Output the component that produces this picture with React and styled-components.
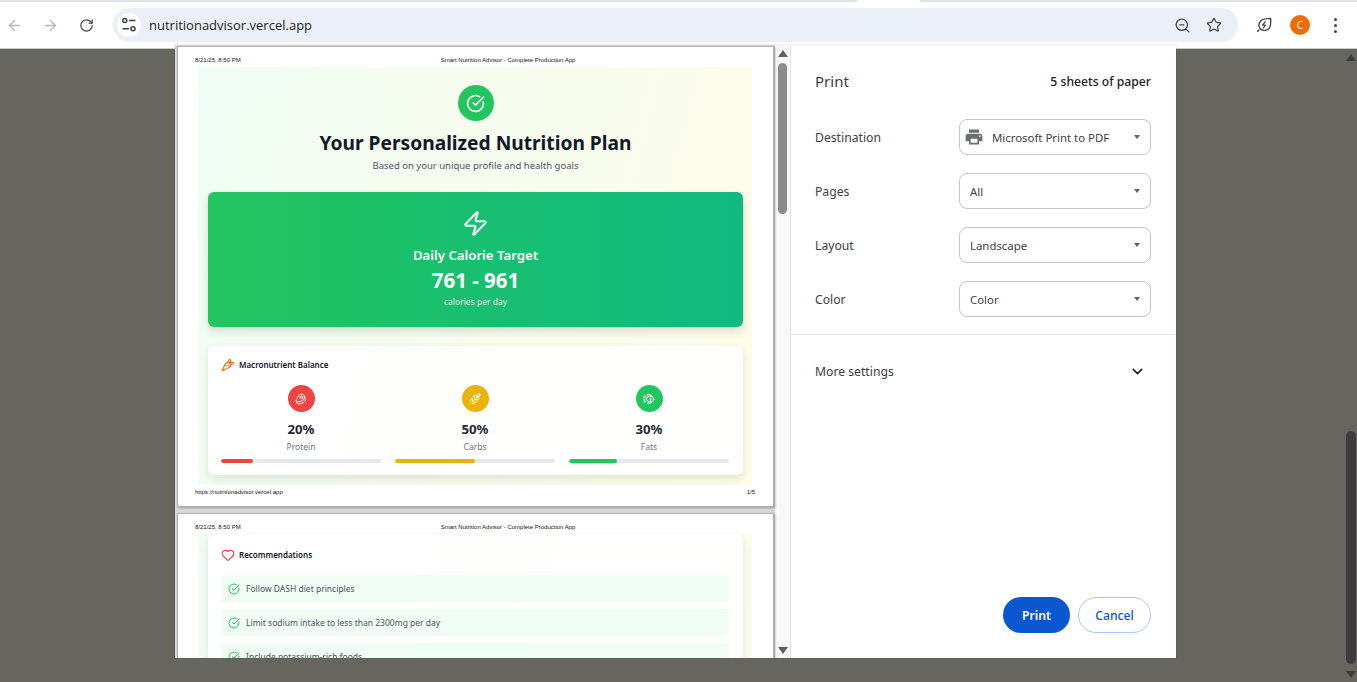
import styled, { createGlobalStyle } from "styled-components";
import { ArrowLeft, ArrowRight, RotateCw, ZoomOut, Star, CircleCheckBig, Zap, Carrot, Beef, Wheat, Fish, Heart, ChevronDown } from "lucide-react";
import { MdPrint } from "react-icons/md";

const UI_FONT = `"Noto Sans", "Open Sans", sans-serif`;

const GlobalStyle = createGlobalStyle`
  html, body {
    margin: 0;
    height: 100%;
    overflow: hidden;
    background: #66655e;
    font-family: ${UI_FONT};
  }
  * { box-sizing: border-box; }
`;

const macros = [
  { value: "20%", label: "Protein", color: "#ef4444", fill: 20, Icon: Beef },
  { value: "50%", label: "Carbs", color: "#eab308", fill: 50, Icon: Wheat },
  { value: "30%", label: "Fats", color: "#22c55e", fill: 30, Icon: Fish },
];

const settings = [
  { label: "Destination", value: "Microsoft Print to PDF", printer: true },
  { label: "Pages", value: "All" },
  { label: "Layout", value: "Landscape" },
  { label: "Color", value: "Color" },
];

const recommendations = [
  "Follow DASH diet principles",
  "Limit sodium intake to less than 2300mg per day",
  "Include potassium-rich foods",
];

const TuneIcon = () => (
  <svg width="16" height="16" viewBox="0 0 16 16" fill="none" stroke="#3c4043" strokeWidth="1.5">
    <circle cx="3.8" cy="3.6" r="2" />
    <path d="M8 3.6h6.5M1.5 11.8H8" />
    <circle cx="12" cy="11.8" r="2" />
  </svg>
);

const LeafIcon = () => (
  <svg width="16" height="16" viewBox="0 0 16 16" fill="none" stroke="#474747" strokeWidth="1.4" strokeLinejoin="round">
    <path d="M1.3 14.7l2-2.100M14.600 1.400c.4 5 .1 8.200-1.600 10-2.300 2.400-6.200 2.500-8.600.7C2.300 9.900 2.500 6.300 4.700 4 6.800 2 10.300 1.400 14.600 1.400z" />
    <path d="M9.500 4.300L6.500 8.200h3L7 11.400" strokeWidth="1.300" />
  </svg>
);

const App = () => {
  return (
    <>
      <GlobalStyle />
      <TabEdge><ActiveTab /></TabEdge>
      <Toolbar>
        <NavIcon $muted><ArrowLeft size={17} strokeWidth={2} /></NavIcon>
        <NavIcon $muted><ArrowRight size={17} strokeWidth={2} /></NavIcon>
        <NavIcon><RotateCw size={15} strokeWidth={2} /></NavIcon>
        <AddressBar>
          <SiteChip><TuneIcon /></SiteChip>
          <Url>nutritionadvisor.vercel.app</Url>
          <AddressActions>
            <ZoomOut size={17} strokeWidth={1.8} color="#474747" />
            <Star size={16} strokeWidth={1.8} color="#474747" />
          </AddressActions>
        </AddressBar>
        <RightActions>
          <LeafIcon />
          <Avatar>C</Avatar>
          <Dots><i /><i /><i /></Dots>
        </RightActions>
      </Toolbar>

      <Backdrop>
        <PageScrollbar>
          <ScrollArrow $dark />
          <PageThumb />
          <ScrollArrow $dark $down />
        </PageScrollbar>
      </Backdrop>

      <Dialog>
        <Preview>
          <Sheets>
            <Sheet>
              <SheetHeader>
                <span>8/21/25, 8:50 PM</span>
                <SheetTitle>Smart Nutrition Advisor - Complete Production App</SheetTitle>
              </SheetHeader>
              <PageBody>
                <BadgeCircle><CircleCheckBig size={19} strokeWidth={2} color="#fff" /></BadgeCircle>
                <Title>Your Personalized Nutrition Plan</Title>
                <Subtitle>Based on your unique profile and health goals</Subtitle>
                <CalorieCard>
                  <Zap size={27} strokeWidth={1.8} color="#fff" />
                  <CalorieLabel>Daily Calorie Target</CalorieLabel>
                  <CalorieValue>761 - 961</CalorieValue>
                  <CalorieUnit>calories per day</CalorieUnit>
                </CalorieCard>
                <MacroCard>
                  <CardHeading>
                    <Carrot size={14} strokeWidth={2} color="#f97316" />
                    Macronutrient Balance
                  </CardHeading>
                  <MacroGrid>
                    {macros.map(({ value, label, color, fill, Icon }) => (
                      <Macro key={label}>
                        <MacroIcon $color={color}><Icon size={12} strokeWidth={2} color="#fff" /></MacroIcon>
                        <MacroValue>{value}</MacroValue>
                        <MacroLabel>{label}</MacroLabel>
                        <Track><Fill $color={color} style={{ width: `${fill}%` }} /></Track>
                      </Macro>
                    ))}
                  </MacroGrid>
                </MacroCard>
              </PageBody>
              <SheetFooter>
                <span>https://nutritionadvisor.vercel.app</span>
                <span>1/5</span>
              </SheetFooter>
            </Sheet>

            <Sheet>
              <SheetHeader>
                <span>8/21/25, 8:50 PM</span>
                <SheetTitle>Smart Nutrition Advisor - Complete Production App</SheetTitle>
              </SheetHeader>
              <PageBody $second>
                <RecCard>
                  <RecHeading>
                    <Heart size={14} strokeWidth={2} color="#ef4444" />
                    Recommendations
                  </RecHeading>
                  {recommendations.map((text) => (
                    <RecRow key={text}>
                      <CircleCheckBig size={12} strokeWidth={2} color="#22c55e" />
                      {text}
                    </RecRow>
                  ))}
                </RecCard>
              </PageBody>
            </Sheet>
          </Sheets>
          <PreviewScrollbar>
            <ScrollArrow />
            <PreviewThumb />
            <ScrollArrow $down />
          </PreviewScrollbar>
        </Preview>

        <Settings>
          <SettingsHeader>
            <PrintTitle>Print</PrintTitle>
            <SheetCount>5 sheets of paper</SheetCount>
          </SettingsHeader>
          <SettingRows>
            {settings.map(({ label, value, printer }) => (
              <SettingRow key={label}>
                <SettingLabel>{label}</SettingLabel>
                <Select $withIcon={printer}>
                  {printer && <MdPrint size={20} color="#6b6f73" />}
                  <SelectValue>{value}</SelectValue>
                  <Caret />
                </Select>
              </SettingRow>
            ))}
          </SettingRows>
          <MoreSettings>
            More settings
            <ChevronDown size={17} strokeWidth={2.2} color="#202124" />
          </MoreSettings>
          <Buttons>
            <PrintButton>Print</PrintButton>
            <CancelButton>Cancel</CancelButton>
          </Buttons>
        </Settings>
      </Dialog>
    </>
  );
};

export default App;

const TabEdge = styled.div`
  height: 2px;
  background: #dde3e9;
  padding-left: 857px;
`;

const ActiveTab = styled.div`
  width: 63px;
  height: 100%;
  background: #fff;
`;

const Toolbar = styled.div`
  height: 47px;
  background: #fff;
  display: flex;
  align-items: center;
  padding-left: 0;
  border-bottom: 1px solid #c9cacc;
`;

const NavIcon = styled.div`
  width: 36px;
  flex: none;
  display: flex;
  justify-content: center;
  color: ${(p) => (p.$muted ? "#b4b6b9" : "#474747")};
  &:first-child {
    margin-left: -4px;
  }
`;

const AddressBar = styled.div`
  width: 1125px;
  height: 34px;
  margin-left: 9px;
  flex: none;
  border-radius: 17px;
  background: #ebeff8;
  display: flex;
  align-items: center;
  padding-left: 4px;
`;

const SiteChip = styled.div`
  width: 24px;
  height: 24px;
  border-radius: 50%;
  background: #fff;
  display: flex;
  align-items: center;
  justify-content: center;
`;

const Url = styled.div`
  margin-left: 8px;
  font-family: "Open Sans", sans-serif;
  font-size: 13px;
  color: #1f1f1f;
`;

const AddressActions = styled.div`
  margin-left: auto;
  display: flex;
  align-items: center;
  gap: 15px;
  padding-right: 16px;
`;

const RightActions = styled.div`
  display: flex;
  align-items: center;
  margin-left: 18px;
  gap: 18px;
`;

const Avatar = styled.div`
  width: 20px;
  height: 20px;
  border-radius: 50%;
  background: #ee6c00;
  color: #fff;
  font-size: 10px;
  display: flex;
  align-items: center;
  justify-content: center;
`;

const Dots = styled.div`
  display: flex;
  flex-direction: column;
  gap: 3px;
  padding-left: 6px;
  i {
    display: block;
    width: 3px;
    height: 3px;
    border-radius: 50%;
    background: #474747;
  }
`;

const Backdrop = styled.div`
  height: 633px;
  background: #66655e;
  display: flex;
  justify-content: flex-end;
`;

const PageScrollbar = styled.div`
  width: 12px;
  height: 100%;
  display: flex;
  flex-direction: column;
  align-items: center;
  padding-top: 5px;
`;

const PageThumb = styled.div`
  width: 10px;
  height: 233px;
  margin-top: auto;
  background: #3c3c3c;
  border-radius: 5px;
`;

const ScrollArrow = styled.div`
  flex: none;
  margin-top: ${(p) => (p.$down ? "7px" : "0")};
  margin-bottom: ${(p) => (p.$down ? "4px" : "0")};
  width: 0;
  height: 0;
  border-left: 5px solid transparent;
  border-right: 5px solid transparent;
  ${(p) => (p.$down ? "border-top" : "border-bottom")}: 7px solid ${(p) => (p.$dark ? "#3c3c3c" : "#5f5f5f")};
`;

const Dialog = styled.div`
  position: absolute;
  left: 175px;
  top: 45px;
  width: 1001px;
  height: 613px;
  background: #fff;
  display: flex;
  overflow: hidden;
  box-shadow: 0 0 1px rgba(0, 0, 0, 0.4);
`;

const Preview = styled.div`
  width: 616px;
  display: flex;
  border-right: 1px solid #e3e3e3;
  background: #f8f8f9;
`;

const Sheets = styled.div`
  width: 600px;
  padding: 2px 2px 0 3px;
  display: flex;
  flex-direction: column;
  gap: 8px;
  background: #d8d8da;
  flex: none;
`;

const Sheet = styled.div`
  flex: none;
  height: 459px;
  background: #fff;
  padding: 0 21px 0 20px;
  box-shadow: 0 0 0 1px #b0b1b3, 1px 1px 2px 1px #98999b;
  display: flex;
  flex-direction: column;
`;

const SheetHeader = styled.div`
  height: 20px;
  margin-left: -3px;
  display: flex;
  padding-top: 10px;
  font-family: "Liberation Sans", sans-serif;
  font-size: 6px;
  line-height: 7px;
  color: #111;
`;

const SheetTitle = styled.span`
  margin-left: 200px;
`;

const PageBody = styled.div`
  height: ${(p) => (p.$second ? "439px" : "418px")};
  background: linear-gradient(105deg, #f0fdf4, #fefce8);
  padding: ${(p) => (p.$second ? "0 9px 0 10px" : "18px 9px 0 10px")};
  display: flex;
  flex-direction: column;
  align-items: center;
`;

const BadgeCircle = styled.div`
  width: 36px;
  height: 36px;
  border-radius: 50%;
  background: #22c55e;
  display: flex;
  align-items: center;
  justify-content: center;
  flex: none;
`;

const Title = styled.div`
  margin-top: 8px;
  font-size: 19.2px;
  line-height: 28px;
  font-weight: 700;
  color: #111827;
`;

const Subtitle = styled.div`
  margin-top: 1px;
  font-size: 9.5px;
  line-height: 15px;
  color: #4b5563;
`;

const CalorieCard = styled.div`
  width: 535px;
  height: 135px;
  margin-top: 19px;
  flex: none;
  border-radius: 6px;
  background: linear-gradient(90deg, #22c55e, #10b981);
  box-shadow: 0 4px 10px rgba(0, 0, 0, 0.14);
  display: flex;
  flex-direction: column;
  align-items: center;
  padding-top: 18px;
  color: #fff;
`;

const CalorieLabel = styled.div`
  margin-top: 9px;
  font-size: 13.2px;
  line-height: 18px;
  font-weight: 600;
`;

const CalorieValue = styled.div`
  margin-top: 2px;
  font-size: 20.5px;
  line-height: 28px;
  font-weight: 700;
`;

const CalorieUnit = styled.div`
  margin-top: 2px;
  font-size: 8.5px;
  line-height: 12px;
  opacity: 0.8;
`;

const MacroCard = styled.div`
  width: 535px;
  height: 129px;
  margin-top: 19px;
  flex: none;
  border-radius: 7px;
  background: rgba(255, 255, 255, 0.88);
  box-shadow: 0 4px 10px rgba(0, 0, 0, 0.1);
  padding: 11px 14px 0 13px;
`;

const CardHeading = styled.div`
  display: flex;
  align-items: center;
  gap: 4px;
  font-size: 8px;
  line-height: 16px;
  font-weight: 600;
  color: #111827;
`;

const MacroGrid = styled.div`
  display: grid;
  grid-template-columns: repeat(3, 1fr);
  gap: 14px;
  margin-top: 12px;
`;

const Macro = styled.div`
  display: flex;
  flex-direction: column;
  align-items: center;
`;

const MacroIcon = styled.div`
  width: 27px;
  height: 27px;
  border-radius: 50%;
  background: ${(p) => p.$color};
  display: flex;
  align-items: center;
  justify-content: center;
`;

const MacroValue = styled.div`
  margin-top: 7px;
  font-size: 13.2px;
  line-height: 20px;
  font-weight: 700;
  color: #1f2937;
`;

const MacroLabel = styled.div`
  margin-top: 1px;
  font-size: 8.5px;
  line-height: 13px;
  color: #6b7280;
`;

const Track = styled.div`
  width: 100%;
  height: 4px;
  margin-top: 6px;
  border-radius: 2px;
  background: #e5e7eb;
  overflow: hidden;
`;

const Fill = styled.div`
  height: 100%;
  background: ${(p) => p.$color};
  border-radius: 2px;
`;

const SheetFooter = styled.div`
  display: flex;
  justify-content: space-between;
  margin-left: -3px;
  padding: 4px 0 0;
  margin-right: -3px;
  font-family: "Liberation Sans", sans-serif;
  font-size: 6px;
  line-height: 7px;
  color: #111;
`;

const RecCard = styled.div`
  width: 535px;
  height: 300px;
  flex: none;
  border-radius: 7px;
  background: rgba(255, 255, 255, 0.88);
  box-shadow: 0 4px 10px rgba(0, 0, 0, 0.1);
  padding: 13px 14px 0 13px;
`;

const RecHeading = styled(CardHeading)`
  margin-bottom: 12px;
`;

const RecRow = styled.div`
  height: 27px;
  margin-bottom: 7px;
  border-radius: 3px;
  background: #f0fdf4;
  display: flex;
  align-items: center;
  gap: 6px;
  padding-left: 7px;
  font-size: 8.5px;
  color: #4b5563;
`;

const PreviewScrollbar = styled.div`
  flex: 1;
  display: flex;
  flex-direction: column;
  align-items: center;
  padding-top: 5px;
`;

const PreviewThumb = styled.div`
  width: 9px;
  height: 151px;
  margin-top: 6px;
  margin-bottom: auto;
  border-radius: 5px;
  background: #8b8b8b;
`;

const Settings = styled.div`
  flex: 1;
  display: flex;
  flex-direction: column;
  color: #202124;
`;

const SettingsHeader = styled.div`
  display: flex;
  justify-content: space-between;
  align-items: center;
  padding: 24px 25px 0 24px;
  height: 48px;
`;

const PrintTitle = styled.div`
  font-size: 15px;
  color: #3c4043;
`;

const SheetCount = styled.div`
  font-size: 12.2px;
  font-weight: 500;
`;

const SettingRows = styled.div`
  padding: 26px 25px 17px 24px;
  display: flex;
  flex-direction: column;
  gap: 18px;
  border-bottom: 1px solid #e3e3e3;
`;

const SettingRow = styled.div`
  display: flex;
  justify-content: space-between;
  align-items: center;
`;

const SettingLabel = styled.div`
  font-size: 12.2px;
  color: #3c4043;
`;

const Select = styled.div`
  width: 192px;
  height: 36px;
  border: 1px solid #c4c7c5;
  border-radius: 8px;
  display: flex;
  align-items: center;
  gap: 8px;
  padding: 0 10px 0 ${(p) => (p.$withIcon ? "4px" : "10px")};
  font-size: 11.4px;
  color: #3c4043;
`;

const SelectValue = styled.div`
  flex: 1;
  white-space: nowrap;
`;

const Caret = styled.div`
  width: 0;
  height: 0;
  border-left: 3.5px solid transparent;
  border-right: 3.5px solid transparent;
  border-top: 4px solid #5f6368;
`;

const MoreSettings = styled.div`
  display: flex;
  justify-content: space-between;
  align-items: center;
  padding: 0 30px 0 24px;
  height: 72px;
  font-size: 12.2px;
  color: #3c4043;
`;

const Buttons = styled.div`
  margin-top: auto;
  display: flex;
  justify-content: flex-end;
  gap: 8px;
  padding: 0 25px 25px 0;
`;

const PrintButton = styled.div`
  width: 67px;
  height: 36px;
  border-radius: 18px;
  background: #0b57d0;
  color: #fff;
  font-size: 12.2px;
  font-weight: 600;
  display: flex;
  align-items: center;
  justify-content: center;
`;

const CancelButton = styled(PrintButton)`
  width: 73px;
  background: #fff;
  color: #0b57d0;
  border: 1px solid #a8c7fa;
  font-weight: 500;
`;
